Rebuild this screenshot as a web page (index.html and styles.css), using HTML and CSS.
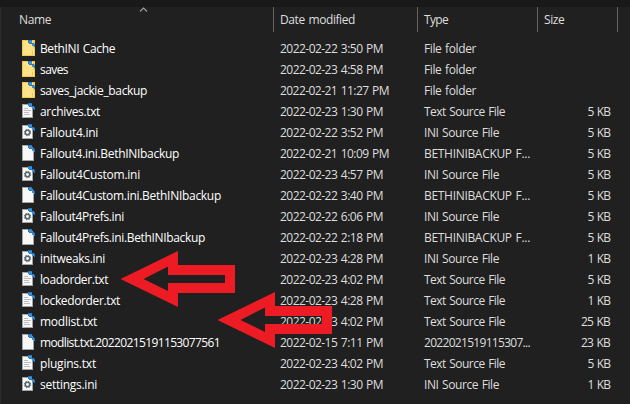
FILE: index.html
```html
<!DOCTYPE html>
<html lang="en">
<head>
<meta charset="utf-8">
<title>Files</title>
<link rel="stylesheet" href="styles.css">
</head>
<body>
<svg class="defs" width="0" height="0">
  <defs>
    <g id="fold">
      <path d="M6 0h4v3h2l1 2v2h-1V6h-2V4H7V3H6z" fill="#2679bd"/>
      <path d="M7 1h3v2H7zM10 4h2v2h-2z" fill="#3791dc"/>
    </g>
  </defs>
  <symbol id="folder" viewBox="0 0 14 16">
    <path d="M0 0h13v16H0z" fill="#f3c94b"/>
    <path d="M1 1h10v9l-1 1v4H1z" fill="#ffe28a"/>
    <path d="M11 9h1v6h-1z" fill="#ffe9a3"/>
    <use href="#fold"/>
  </symbol>
  <symbol id="page" viewBox="0 0 14 16">
    <path d="M0 0h9l3 4v12H0z" fill="#a4a4a4"/>
    <path d="M1 1h7l3 4v10H1z" fill="#f8f8f8"/>
    <use href="#fold"/>
  </symbol>
  <symbol id="text" viewBox="0 0 14 16">
    <path d="M0 1h8l3 4v10H0z" fill="#a4a4a4"/>
    <path d="M1 2h7l2 3v9H1z" fill="#f8f8f8"/>
    <path d="M2 5.500h4M2 7.500h7M2 9.500h5M2 11.500h6" stroke="#b9bfc3"/>
    <use href="#fold"/>
  </symbol>
  <symbol id="ini" viewBox="0 0 14 16">
    <path d="M0 1h8l3 4v10H0z" fill="#a4a4a4"/>
    <path d="M1 2h7l2 3v9H1z" fill="#f8f8f8"/>
    <circle cx="5.500" cy="8.500" r="3.100" fill="none" stroke="#7b8990" stroke-width="1.300" stroke-dasharray="1.250 1.185"/>
    <circle cx="5.500" cy="8.500" r="2.200" fill="none" stroke="#56656d" stroke-width="1.500"/>
    <use href="#fold"/>
  </symbol>
</svg>
<main class="explorer">
  <div class="topbar"></div>
  <header class="header">
    <div class="head name-head"><span data-w="32">Name</span><svg class="sort" viewBox="0 0 9 5"><path d="M1 4.500 4.500 1 8 4.500"/></svg></div>
    <div class="head"><span data-w="75">Date modified</span></div>
    <div class="head"><span data-w="24">Type</span></div>
    <div class="head"><span data-w="20.500">Size</span></div>
  </header>
  <section class="rows" id="rows"></section>
  <svg class="arrows" viewBox="0 0 630 404">
    <defs><path id="arrow" fill-rule="evenodd" d="M120.500 279 178 251v14h57v28h-57v14zM143.500 279 168 291v-8h57v-8h-57v-8.500z"/></defs>
    <use href="#arrow"/><use href="#arrow" x="97" y="41"/>
  </svg>
</main>
<script src="app.js"></script>
</body>
</html>
```
FILE: styles.css
```css
* { box-sizing: border-box; }
body { margin: 0; background: #202020; }
.defs { display: block; position: absolute; }
.explorer {
  position: relative;
  width: 630px;
  height: 404px;
  overflow: hidden;
  background: #202020;
  color: #dedede;
  font: 12px/21px "Open Sans", "Noto Sans", sans-serif;
  font-kerning: none;
  font-variant-ligatures: none;
  white-space: nowrap;
  word-spacing: 1px;
}
.topbar { height: 7px; background: #191919; }
.header, .row { display: grid; grid-template-columns: 274px 144px 120px 80px; }
.header { height: 25px; }
.head { position: relative; border-right: 1px solid #636363; padding: 2px 0 0 6px; }
.name-head { padding-left: 19px; }
.sort { position: absolute; left: 139px; top: 0; width: 9px; height: 5px; fill: none; stroke: #a0a0a0; stroke-width: 1.1; }
.rows { padding-top: 6px; }
.row { height: 21px; }
.cell { padding-left: 6px; }
.name { display: flex; align-items: flex-start; gap: 4px; padding-left: 22px; color: #fff; }
.icon { width: 14px; height: 16px; flex: none; margin-top: 2px; }
.size { text-align: right; padding-right: 8px; }
.explorer::before { content: ""; position: absolute; left: 0; top: 7px; bottom: 0; width: 1px; background: #2b2b2b; }
.arrows { position: absolute; left: 0; top: 0; width: 630px; height: 404px; fill: #ed1c24; }
```
FILE: app.js
```js
// Each entry: icon, name, name width, date, type, size.
const files = [
  ["folder", "BethINI Cache", 75, "2022-02-22 3:50 PM", "File folder", ""],
  ["folder", "saves", 28, "2022-02-23 4:58 PM", "File folder", ""],
  ["folder", "saves_jackie_backup", 107, "2022-02-21 11:27 PM", "File folder", ""],
  ["text", "archives.txt", 60, "2022-02-23 1:30 PM", "Text Source File", "5 KB"],
  ["ini", "Fallout4.ini", 58, "2022-02-22 3:52 PM", "INI Source File", "5 KB"],
  ["page", "Fallout4.ini.BethINIbackup", 139, "2022-02-21 10:09 PM", "BETHINIBACKUP F...", "5 KB"],
  ["ini", "Fallout4Custom.ini", 100, "2022-02-23 4:57 PM", "INI Source File", "5 KB"],
  ["page", "Fallout4Custom.ini.BethINIbackup", 181, "2022-02-22 3:40 PM", "BETHINIBACKUP F...", "5 KB"],
  ["ini", "Fallout4Prefs.ini", 84, "2022-02-22 6:06 PM", "INI Source File", "5 KB"],
  ["page", "Fallout4Prefs.ini.BethINIbackup", 165, "2022-02-22 2:18 PM", "BETHINIBACKUP F...", "5 KB"],
  ["ini", "initweaks.ini", 65, "2022-02-23 4:28 PM", "INI Source File", "1 KB"],
  ["text", "loadorder.txt", 68, "2022-02-23 4:02 PM", "Text Source File", "5 KB"],
  ["text", "lockedorder.txt", 80, "2022-02-23 4:28 PM", "Text Source File", "1 KB"],
  ["text", "modlist.txt", 57, "2022-02-23 4:02 PM", "Text Source File", "25 KB"],
  ["page", "modlist.txt.20220215191153077561", 180, "2022-02-15 7:11 PM", "2022021519115307...", "23 KB"],
  ["text", "plugins.txt", 56, "2022-02-23 4:02 PM", "Text Source File", "5 KB"],
  ["ini", "settings.ini", 57, "2022-02-23 1:30 PM", "INI Source File", "1 KB"]
];
const typeWidths = {
  "File folder": 52, "Text Source File": 81, "INI Source File": 75,
  "BETHINIBACKUP F...": 106, "2022021519115307...": 106
};
const label = (text, w) => `<span data-w="${w}">${text}</span>`;
document.getElementById("rows").innerHTML = files.map(([icon, name, w, date, type, size]) => `
  <div class="row">
    <div class="cell name"><svg class="icon"><use href="#${icon}"/></svg>${label(name, w)}</div>
    <div class="cell">${label(date, date.length > 18 ? 109 : 103)}</div>
    <div class="cell">${label(type, typeWidths[type])}</div>
    <div class="cell size">${size && label(size, size.length > 4 ? 29 : 22.5)}</div>
  </div>`).join("");

document.querySelectorAll("[data-w]").forEach(el => {
  const natural = el.getBoundingClientRect().width;
  el.style.letterSpacing = (el.dataset.w - natural) / el.textContent.length + "px";
});
```
